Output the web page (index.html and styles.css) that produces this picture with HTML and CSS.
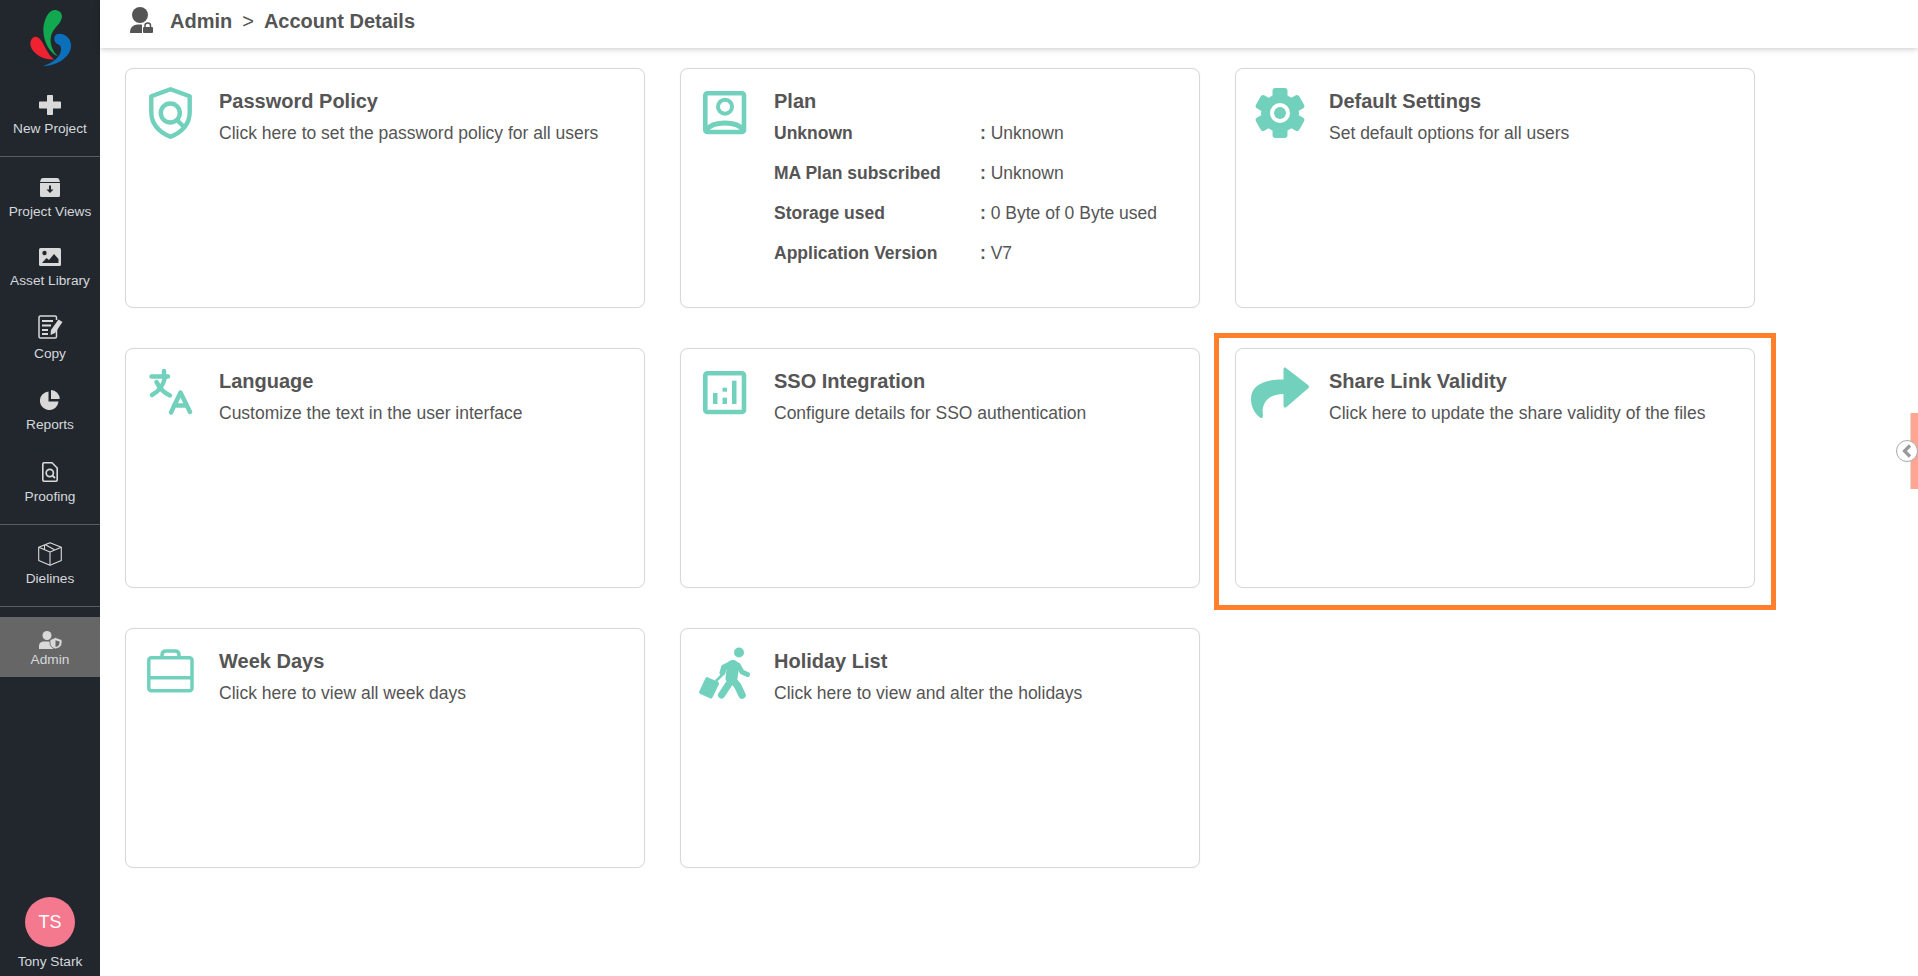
FILE: index.html
```html
<!DOCTYPE html>
<html lang="en">
<head>
<meta charset="utf-8">
<title>Account Details</title>
<link rel="stylesheet" href="styles.css">
</head>
<body>
<div class="app">
  <aside class="sidebar">
    <div class="logo">
      <svg width="41" height="57" viewBox="90 30 123 170">
        <path fill="#12a84f" d="M160 30C175 28 190 38 185 55C178 78 155 85 152 115C150 135 160 155 173 168C150 158 130 125 130 90C130 60 145 32 160 30Z"/>
        <path fill="#ee2230" d="M105 110C120 108 128 130 140 150C146 162 155 172 162 178C135 180 105 165 95 145C87 130 92 113 105 110Z"/>
        <path fill="#0c6fbb" d="M175 101C200 100 215 120 213 140C210 172 170 198 128 198C155 190 185 170 183 145C182 130 170 135 165 125C160 112 165 103 175 101Z"/>
      </svg>
    </div>
    <a class="nav-item nav-new">
      <svg class="nav-icon" width="22" height="20" viewBox="0 0 22 20"><path fill="#d9d9d9" d="M8 0.8Q8 0 8.8 0H13.2Q14 0 14 .8V6.5H21.2Q22 6.5 22 7.3V12.7Q22 13.5 21.2 13.5H14V19.2Q14 20 13.2 20H8.8Q8 20 8 19.2V13.5H.8Q0 13.5 0 12.7V7.3Q0 6.5 .8 6.5H8Z"/></svg>
      <span class="nav-label">New Project</span>
    </a>
    <div class="nav-group nav-group-main">
      <a class="nav-item">
        <svg class="nav-icon" width="20" height="19" viewBox="0 0 20 19"><path fill="#d9d9d9" d="M3 0H17Q19 0 19.4 2L20 4H0L.6 2Q1 0 3 0ZM0 5H20V17.5Q20 19 18.5 19H1.5Q0 19 0 17.5Z"/><path fill="#22272e" d="M9 7.5H11V11.5H13.5L10 15L6.500 11.500H9Z"/></svg>
        <span class="nav-label">Project Views</span>
      </a>
      <a class="nav-item">
        <svg class="nav-icon" width="22" height="18" viewBox="0 0 22 18"><rect width="22" height="18" rx="1.500" fill="#d9d9d9"/><circle cx="5.500" cy="5" r="2.200" fill="#22272e"/><path fill="#22272e" d="M3 15L7.500 10L10 12L15 6L19.500 11V15Z"/></svg>
        <span class="nav-label">Asset Library</span>
      </a>
      <a class="nav-item">
        <svg class="nav-icon" width="25" height="24" viewBox="0 0 25 24"><path fill="none" stroke="#d9d9d9" stroke-width="1.500" d="M18.500 13V21.500Q18.500 23 17 23H2.500Q1 23 1 21.500V2.500Q1 1 2.500 1H17Q18.500 1 18.500 2.500V5"/><path stroke="#d9d9d9" stroke-width="1.800" d="M4 6H15M4 10.500H13M4 15H10M4 19H10"/><path fill="#d9d9d9" d="M20.500 4.500L24.500 7L17 18L12.500 20L13 15Z"/></svg>
        <span class="nav-label">Copy</span>
      </a>
      <a class="nav-item">
        <svg class="nav-icon" width="20" height="20" viewBox="0 0 20 20"><path fill="#d9d9d9" d="M8.500 1.500V11.500H18.500A9.300 9.300 0 1 1 8.500 1.500Z"/><path fill="#d9d9d9" d="M11 0A9 9 0 0 1 19.700 9H11Z"/></svg>
        <span class="nav-label">Reports</span>
      </a>
      <a class="nav-item">
        <svg class="nav-icon" width="16" height="20" viewBox="0 0 16 20"><path fill="none" stroke="#d9d9d9" stroke-width="1.600" d="M2 .8H10L15.200 6V18Q15.200 19.200 14 19.200H2Q.8 19.200 .8 18V2Q.8 .8 2 .8Z"/><circle cx="7.800" cy="11" r="3.600" fill="none" stroke="#d9d9d9" stroke-width="1.700"/><path stroke="#d9d9d9" stroke-width="1.800" d="M10.300 13.500L13 16"/></svg>
        <span class="nav-label">Proofing</span>
      </a>
    </div>
    <div class="nav-group nav-group-die">
      <a class="nav-item">
        <svg class="nav-icon" width="24" height="24" viewBox="0 0 24 24"><g fill="none" stroke="#d9d9d9" stroke-width="1.100" stroke-linejoin="round"><path d="M12 .7L23.300 5.200V18.500L12 23.300L.7 18.500V5.200Z"/><path d="M.7 5.200L12 10L23.300 5.200M12 10V23.300"/><path d="M6.500 8V3M16.500 7.800L7 2.500"/></g></svg>
        <span class="nav-label">Dielines</span>
      </a>
    </div>
    <a class="nav-item nav-active">
      <svg class="nav-icon" width="23" height="18" viewBox="0 0 23 18"><circle cx="8" cy="4.500" r="4.500" fill="#d9d9d9"/><path fill="#d9d9d9" d="M0 18V15Q0 10.500 5 10.500H11Q13 10.500 13.500 11V15Q13.500 17 15 18Z"/><path fill="#d9d9d9" d="M16.500 6.500L23 8.800V12Q23 16.500 16.500 18Q11 16.500 11 12V8.800Z" stroke="#666" stroke-width=".8"/><path fill="#666" d="M16.500 9.300L20.500 10.500V12Q20.500 15 16.500 16Z"/></svg>
      <span class="nav-label">Admin</span>
    </a>
    <div class="profile">
      <div class="avatar">TS</div>
      <span class="nav-label">Tony Stark</span>
    </div>
  </aside>

  <main class="main">
    <header class="topbar">
      <svg class="topbar-icon" width="23" height="26" viewBox="0 0 23 26"><circle cx="10" cy="8" r="8" fill="#555"/><path fill="#555" d="M0 26C0 19 4 17.500 10 17.500C12 17.500 12.500 18 12 19.500V26Z"/><path fill="none" stroke="#555" stroke-width="1.500" d="M15 20.500V18.500Q15 16 17.800 16Q20.500 16 20.500 18.500V20.500"/><rect x="13" y="20" width="10" height="6" rx="1" fill="#555"/></svg>
      <span class="crumb">Admin</span>
      <span class="crumb-sep">&gt;</span>
      <span class="crumb">Account Details</span>
    </header>

    <section class="cards">
      <article class="card">
        <svg class="card-icon" viewBox="0 0 60 60"><g fill="none" stroke="#72d1bd" stroke-width="4.400"><path d="M30.500 6.200L49.700 13.300V29C49.700 42 41 49.500 30.500 53.800C20 49.500 11.300 42 11.300 29V13.300Z" stroke-linejoin="round"/><circle cx="30.300" cy="30" r="9.500"/><path d="M37 37L43.500 43.500"/></g></svg>
        <div class="card-body">
          <h2 class="card-title">Password Policy</h2>
          <p class="card-text">Click here to set the password policy for all users</p>
        </div>
      </article>

      <article class="card">
        <svg class="card-icon" viewBox="0 0 60 60"><g fill="none" stroke="#72d1bd"><rect x="10.300" y="10.300" width="38.700" height="38.700" rx="2" stroke-width="4.600"/><circle cx="30" cy="23.700" r="7" stroke-width="4"/><path d="M11 47C18 37.500 42 37.500 48.500 47" stroke-width="5"/></g></svg>
        <div class="card-body">
          <h2 class="card-title">Plan</h2>
          <dl class="plan">
            <dt>Unknown</dt><dd><b>:</b> Unknown</dd>
            <dt>MA Plan subscribed</dt><dd><b>:</b> Unknown</dd>
            <dt>Storage used</dt><dd><b>:</b> 0 Byte of 0 Byte used</dd>
            <dt>Application Version</dt><dd><b>:</b> V7</dd>
          </dl>
        </div>
      </article>

      <article class="card">
        <svg class="card-icon" viewBox="0 0 60 60"><g fill="#72d1bd"><circle cx="30" cy="30" r="19"/><rect x="22.500" y="5" width="15" height="12" rx="3"/><rect x="22.500" y="5" width="15" height="12" rx="3" transform="rotate(60 30 30)"/><rect x="22.500" y="5" width="15" height="12" rx="3" transform="rotate(120 30 30)"/><rect x="22.500" y="5" width="15" height="12" rx="3" transform="rotate(180 30 30)"/><rect x="22.500" y="5" width="15" height="12" rx="3" transform="rotate(240 30 30)"/><rect x="22.500" y="5" width="15" height="12" rx="3" transform="rotate(300 30 30)"/></g><circle cx="30" cy="30" r="10" fill="#fff"/><circle cx="30" cy="30" r="6" fill="#72d1bd"/></svg>
        <div class="card-body">
          <h2 class="card-title">Default Settings</h2>
          <p class="card-text">Set default options for all users</p>
        </div>
      </article>

      <article class="card">
        <svg class="card-icon" viewBox="0 0 60 60"><g fill="none" stroke="#72d1bd" stroke-width="4.500" stroke-linecap="round" stroke-linejoin="round"><path d="M11.500 13.500H28M24 8V13.500"/><path d="M25 14C23.500 23 18.500 28.500 12 32"/><path d="M16.500 19C20 26 24 30 30 32.500"/><path d="M31 49.500L40.500 29.500L50 49M34 42.500H47"/></g></svg>
        <div class="card-body">
          <h2 class="card-title">Language</h2>
          <p class="card-text">Customize the text in the user interface</p>
        </div>
      </article>

      <article class="card">
        <svg class="card-icon" viewBox="0 0 60 60"><rect x="10.300" y="10.300" width="38.700" height="38.700" rx="2" fill="none" stroke="#72d1bd" stroke-width="4.600"/><g fill="#72d1bd"><rect x="18" y="30" width="4.500" height="11"/><rect x="27.500" y="24.700" width="4.500" height="4"/><rect x="27.500" y="34.700" width="4.500" height="6.300"/><rect x="37" y="17.700" width="4.500" height="23.300"/></g></svg>
        <div class="card-body">
          <h2 class="card-title">SSO Integration</h2>
          <p class="card-text">Configure details for SSO authentication</p>
        </div>
      </article>

      <article class="card card-marked">
        <svg class="card-icon" viewBox="0 0 60 60"><path fill="#72d1bd" d="M36 5Q33.500 3 33.500 7V16.500C14 16.500 1 22 1 36C1 44 5 51 10 54.500Q13 56.500 13 52C11 42 17 31 33.500 31V42Q33.500 46 36.500 44L58 25.500Q60 23.700 58 22Z"/></svg>
        <div class="card-body">
          <h2 class="card-title">Share Link Validity</h2>
          <p class="card-text">Click here to update the share validity of the files</p>
        </div>
        <div class="highlight"></div>
      </article>

      <article class="card">
        <svg class="card-icon" viewBox="0 0 60 60"><g fill="none" stroke="#72d1bd" stroke-width="3.500"><rect x="8.800" y="14.800" width="43.200" height="33" rx="2.500"/><path d="M8.800 34.700H52"/><path d="M22 14.800V12Q22 8 26 8H35Q39 8 39 12V14.800"/></g></svg>
        <div class="card-body">
          <h2 class="card-title">Week Days</h2>
          <p class="card-text">Click here to view all week days</p>
        </div>
      </article>

      <article class="card">
        <svg class="card-icon" viewBox="0 0 60 60"><g fill="#72d1bd"><circle cx="44" cy="9.500" r="5"/><path d="M12.500 34.300L23 38.700Q24.500 39.500 24 41L17.500 54.500Q16.500 56 15 55.300L5 50.800Q3.500 50 4.200 48.500L10.500 35Q11 33.800 12.500 34.300Z"/></g><g fill="none" stroke="#72d1bd" stroke-linecap="round" stroke-linejoin="round"><path d="M21.500 37.500L27.500 31.500" stroke-width="2.500"/><path d="M38 23L36.500 35" stroke-width="12"/><path d="M37.500 37L42.500 42.500L47 52" stroke-width="7.500"/><path d="M33.500 41.500L26.500 52" stroke-width="7"/><path d="M43 22L47 29L52.500 31.500" stroke-width="5"/><path d="M36 21L29 24.500L27.500 29.500" stroke-width="6"/></g></svg>
        <div class="card-body">
          <h2 class="card-title">Holiday List</h2>
          <p class="card-text">Click here to view and alter the holidays</p>
        </div>
      </article>
    </section>

    <div class="drawer">
      <span class="drawer-toggle"><svg width="12" height="14" viewBox="0 0 12 14"><path fill="none" stroke="#999" stroke-width="3.200" d="M9 1.500L3.500 7L9 12.500"/></svg></span>
    </div>
  </main>
</div>
</body>
</html>
```

FILE: styles.css
```css
* { box-sizing: border-box; }

html, body {
  margin: 0;
  height: 100%;
  overflow: hidden;
  background: #fff;
  font-family: "Liberation Sans", Arial, sans-serif;
  color: #555;
}

.app {
  display: flex;
  height: 976px;
}

/* Sidebar */
.sidebar {
  flex: 0 0 100px;
  display: flex;
  flex-direction: column;
  background: #22272e;
  color: #d5d8dc;
}

.logo {
  height: 90px;
  padding-top: 10px;
  display: flex;
  justify-content: center;
  align-items: flex-start;
}

.nav-item {
  display: flex;
  flex-direction: column;
  align-items: center;
  justify-content: flex-end;
}

.nav-label {
  display: block;
  font-size: 13.7px;
  line-height: 16px;
  white-space: nowrap;
}

.nav-new {
  height: 67px;
  padding-bottom: 19px;
  gap: 6px;
  border-bottom: 1px solid #5a5e63;
}

.nav-group {
  display: grid;
  border-bottom: 1px solid #5a5e63;
}

.nav-group-main {
  grid-template-rows: 63px 69px 73px 71px 72px 19px;
  height: 368px;
}

.nav-group-main .nav-item { gap: 7px; }

.nav-group-die {
  height: 82px;
  align-content: end;
  padding-bottom: 19px;
}

.nav-group-die .nav-item { gap: 5px; }

.nav-active {
  height: 60px;
  margin-top: 10px;
  padding-bottom: 9px;
  gap: 3px;
  background: #666;
}

.profile {
  margin-top: auto;
  padding-bottom: 6px;
  display: flex;
  flex-direction: column;
  align-items: center;
  gap: 7px;
}

.avatar {
  width: 50px;
  height: 50px;
  border-radius: 50%;
  background: #f4788e;
  color: #fff;
  font-size: 18px;
  line-height: 50px;
  text-align: center;
}

/* Main column */
.main {
  position: relative;
  flex: 1;
  min-width: 0;
}

.topbar {
  height: 48px;
  padding: 0 0 6px 30px;
  display: flex;
  align-items: center;
  background: #fff;
  box-shadow: 0 1px 6px rgba(0, 0, 0, .22);
  font-size: 20px;
  font-weight: 700;
  color: #555;
}

.topbar-icon { margin-bottom: 2px; }

.crumb:first-of-type { margin-left: 17px; }

.crumb-sep {
  margin: 0 10px;
  font-weight: 400;
}

.cards {
  display: grid;
  grid-template-columns: repeat(3, 520px);
  grid-auto-rows: 240px;
  column-gap: 35px;
  row-gap: 40px;
  padding: 20px 0 0 25px;
}

.card {
  position: relative;
  display: flex;
  padding: 14px 0 0 14px;
  border: 1px solid #d8d8d8;
  border-radius: 8px;
  box-shadow: 0 0 2px rgba(0, 0, 0, .06);
  background: #fff;
}

.card-icon {
  flex: 0 0 60px;
  width: 60px;
  height: 60px;
}

.card-body {
  margin-left: 19px;
  padding-top: 6px;
}

.card-title {
  margin: 0;
  font-size: 20px;
  line-height: 24px;
  font-weight: 700;
  color: #555;
}

.card-text {
  margin: 0;
  font-size: 17.5px;
  line-height: 40px;
  color: #555;
}

.plan {
  margin: 0;
  display: grid;
  grid-template-columns: 206px auto;
  grid-auto-rows: 40px;
  font-size: 17.5px;
  line-height: 40px;
}

.plan dt { font-weight: 700; }
.plan dd { margin: 0; }

.highlight {
  position: absolute;
  left: -22px;
  right: -22px;
  top: -16px;
  bottom: -23px;
  border: 5px solid #ff7f2a;
  pointer-events: none;
}

/* Collapsed right drawer */
.drawer {
  position: absolute;
  top: 413px;
  right: 0;
  width: 8px;
  height: 76px;
  background: #ffa592;
  border-left: 1px solid #ddd;
}

.drawer-toggle {
  position: absolute;
  left: -15px;
  top: 27px;
  width: 22px;
  height: 22px;
  display: flex;
  align-items: center;
  justify-content: center;
  border: 1px solid #aaa;
  border-radius: 50%;
  background: #fff;
}
```
